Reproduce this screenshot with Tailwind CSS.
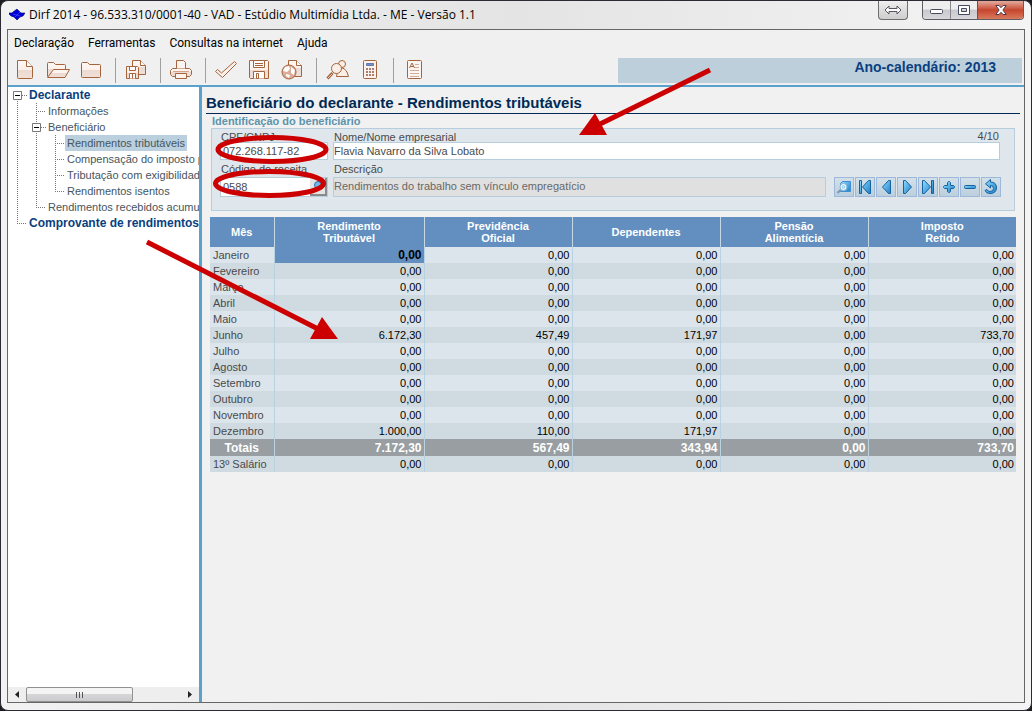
<!DOCTYPE html>
<html lang="pt-BR">
<head>
<meta charset="utf-8">
<title>Dirf 2014</title>
<script src="https://cdn.jsdelivr.net/npm/@tailwindcss/browser@4"></script>
</head>
<body class="bg-[#1d1a22] font-['Liberation_Sans',Arial,sans-serif] text-[11px] leading-4 text-[#4a4a4a]">
<div class="relative flex h-screen flex-col overflow-hidden rounded-lg border border-[#2e2a33] bg-[#e6e6e6] bg-linear-to-r from-[#f2f2f2] via-[#e4e4e4] to-[#f4f4f4] px-1.5 pb-[7px]">

  <header class="flex h-7 shrink-0 items-start pr-px pl-0.5">
    <svg class="mt-1.5 shrink-0" width="16" height="16" viewBox="0 0 16 16"><path fill="#0000d8" stroke="#000060" stroke-width=".6" d="M8 2l3 3 1 1h4l-2 3-3 1-3 3-3-3-3-1-3-3h4l1-1z"/><path stroke="#5060ff" stroke-width=".6" d="M4 7l7 2M6 10l5-5"/></svg>
    <h1 class="grow pt-1.5 pl-1 font-['Open_Sans','Noto_Sans',sans-serif] text-[12px] leading-4 text-black">Dirf 2014 - 96.533.310/0001-40 - VAD - Estúdio Multimídia Ltda. - ME - Versão 1.1</h1>
    <button aria-label="Redimensionar" class="mr-3.5 flex h-[19px] w-[30px] items-center justify-center rounded-b border border-t-0 border-[#6d6d72] bg-linear-to-b from-[#f0f0f0] via-[#dcdcdc] to-[#cfcfcf]"><svg width="18" height="10" viewBox="0 0 18 10" fill="#fff" stroke="#55555d"><path d="M1 5l4-4v2.500h8V1l4 4-4 4V6.500H5V9z"/></svg></button>
    <div class="flex h-[19px] overflow-hidden rounded-b border border-t-0 border-[#5d5d63]">
      <button aria-label="Minimizar" class="flex w-7 items-center justify-center border-r border-[#88888d] bg-linear-to-b from-[#eee] from-45% via-[#c9c9cd] via-50% to-[#d8d8dc]"><svg width="13" height="6" viewBox="0 0 13 6" class="mt-1"><rect x=".5" y=".5" width="12" height="4" rx="1" fill="#fff" stroke="#444a60"/></svg></button>
      <button aria-label="Maximizar" class="flex w-[27px] items-center justify-center border-r border-[#7a4a48] bg-linear-to-b from-[#eee] from-45% via-[#c9c9cd] via-50% to-[#d8d8dc]"><svg width="12" height="10" viewBox="0 0 12 10"><path fill="#fff" stroke="#444a60" fill-rule="evenodd" d="M.5.5h11v9H.5zM3.500 3.500v3h5v-3z"/></svg></button>
      <button aria-label="Fechar" class="flex w-[45px] items-center justify-center bg-linear-to-b from-[#e0a396] from-5% via-[#c5452e] via-50% to-[#d9795c]"><svg width="12" height="10" viewBox="0 0 12 10"><path fill="#fff" stroke="#50384a" d="M.8.500h3.200l2 2.200 2-2.200h3.200L7.900 5l3.300 4.500H8L6 7.300 4 9.500H.8L4.100 5z"/></svg></button>
    </div>
  </header>

  <div class="flex min-h-0 grow flex-col border border-[#666] bg-[#f0f0f0]">
    <nav class="flex h-[26px] shrink-0 items-center gap-3.5 px-1.5 font-[Roboto,'Open_Sans',sans-serif] text-[12px] text-black">
      <button>Declaração</button><button>Ferramentas</button><button>Consultas na internet</button><button>Ajuda</button>
    </nav>

    <div class="flex h-[29px] shrink-0 items-start justify-between pr-0.5">
      <div class="flex h-[27px] items-center pt-px pl-1 text-[#a5643c]" role="toolbar">
        <svg width="0" height="0" class="absolute"><defs><linearGradient id="paper" x1="0" y1="0" x2="0" y2="1"><stop offset="0" stop-color="#fff8f4"/><stop offset=".5" stop-color="#fdf0ea"/><stop offset=".5" stop-color="#ecdad2"/><stop offset="1" stop-color="#f0e0d8"/></linearGradient></defs></svg>
        <button aria-label="Novo" class="flex w-[26px] justify-center"><svg width="24" height="22" viewBox="0 0 24 22" fill="url(#paper)" stroke="currentColor"><path d="M4.500 1.500h9l6 6v11a1 1 0 0 1-1 1h-13a1 1 0 0 1-1-1z"/><path fill="#fff" d="M13.500 1.500v6h6"/></svg></button>
        <button aria-label="Abrir" class="ml-1.5 flex w-[27px] justify-center"><svg width="26" height="22" viewBox="0 0 26 22" fill="url(#paper)" stroke="currentColor"><path d="M2.500 17.500v-13a1 1 0 0 1 1-1h5l2 2h9a1 1 0 0 1 1 1v4"/><path d="M2.500 18.500l6-8h16l-4.500 8z"/></svg></button>
        <button aria-label="Fechar declaração" class="ml-2 flex w-6 justify-center"><svg width="24" height="22" viewBox="0 0 24 22" fill="url(#paper)" stroke="currentColor"><path d="M2.500 17.500v-13a1 1 0 0 1 1-1h5l2 2h10a1 1 0 0 1 1 1v11a1 1 0 0 1-1 1h-17a1 1 0 0 1-1-1z"/></svg></button>
        <span class="mr-2 ml-3 h-[25px] w-px bg-[#a0a0a0]"></span>
        <button aria-label="Gravar cópia" class="flex w-6 justify-center"><svg width="24" height="22" viewBox="0 0 24 22" fill="url(#paper)" stroke="currentColor"><path d="M8.500 1.500h8l5 5v9h-13z"/><path fill="#fff" d="M16.500 1.500v5h5"/><path d="M2.500 7.500h11l1 1v11h-12z"/><path fill="#fff" d="M5.500 7.500h6v4h-6zM5.500 19.500v-5h6v5M8.500 14.500v5"/></svg></button>
        <span class="mr-2 ml-3 h-[25px] w-px bg-[#a0a0a0]"></span>
        <button aria-label="Imprimir" class="flex w-6 justify-center"><svg width="24" height="22" viewBox="0 0 24 22" fill="url(#paper)" stroke="currentColor"><path d="M3.500 9.500h17l2 2v4l-2 2h-17l-2-2v-4z"/><path fill="#fdf3ee" d="M7.500 9.500v-8h7l2 2v6M6.500 14.500h11v5h-11z"/><path stroke="#d9a08a" d="M4 12.500h16"/></svg></button>
        <span class="mr-2 ml-3 h-[25px] w-px bg-[#a0a0a0]"></span>
        <button aria-label="Verificar" class="flex w-6 justify-center"><svg width="24" height="22" viewBox="0 0 24 22" fill="#fbf1ec" stroke="currentColor"><path d="M1.500 12.500l2-2 4 3.500L20.500 2.500l2 2L8.500 18.500z"/></svg></button>
        <button aria-label="Salvar" class="ml-[9px] flex w-6 justify-center"><svg width="24" height="22" viewBox="0 0 24 22" fill="url(#paper)" stroke="currentColor"><path d="M2.500 1.500h18l1 1v17h-18l-1-1z"/><path fill="#fff" d="M6.500 1.500h11v7h-11zM6.500 19.500v-7h11v7M9.500 14.500h2v5h-2z"/><path d="M8 4.500h8M8 6.500h8"/></svg></button>
        <button aria-label="Transmitir" class="ml-[9px] flex w-6 justify-center"><svg width="24" height="22" viewBox="0 0 24 22" fill="url(#paper)" stroke="currentColor"><path d="M8.500 1.500h8l5 5v11h-13z"/><path fill="#fff" d="M16.500 1.500v5h5"/><circle cx="9" cy="13" r="7" fill="#d9ad99"/><path fill="#fff" stroke="none" d="M5 8l4-1 1 3-3 3-4-1zM11 8l4 3-1 5-3-2zM6 15l4 1-1 3-3-2z"/></svg></button>
        <span class="mr-[9px] ml-3 h-[25px] w-px bg-[#a0a0a0]"></span>
        <button aria-label="Consultar" class="flex w-6 justify-center"><svg width="24" height="22" viewBox="0 0 24 22" fill="#fbeee7" stroke="currentColor"><circle cx="16" cy="5" r="3.500"/><path d="M10.500 17.500q1-9 5.500-8.500t6.500 8.500z"/><circle cx="10.500" cy="9.500" r="5" /><path stroke-width="3" d="M1.500 19.500l5-5.500"/><path stroke="#e7c8b8" d="M2 19l4-4"/></svg></button>
        <button aria-label="Calculadora" class="ml-2 flex w-6 justify-center"><svg width="24" height="22" viewBox="0 0 24 22" fill="#fdf3ee" stroke="currentColor"><rect x="5.500" y="1.500" width="13" height="18" rx="1"/><path fill="#7590c5" stroke="#6679a8" d="M8.500 4.500h7v2h-7z"/><path stroke="#a87f72" stroke-width="2" stroke-dasharray="2 1" d="M8 10h8M8 13h8M8 16h8"/></svg></button>
        <span class="mr-[9px] ml-[11px] h-[25px] w-px bg-[#a0a0a0]"></span>
        <button aria-label="Ajuda do preenchimento" class="flex w-6 justify-center"><svg width="24" height="22" viewBox="0 0 24 22" fill="#fdf5f1" stroke="currentColor"><rect x="4.500" y="1.500" width="14" height="18" rx="1"/><path fill="none" d="M6.500 9l2.500-5 2.500 5M7.500 7.500h3"/><path stroke="#d3ab9b" d="M12 5.500h4M12 8.500h4M7 11.500h9M7 14.500h9M7 17.500h9"/></svg></button>
      </div>
      <div class="mt-0.5 h-[25px] w-[404px] bg-[#bdcfdb] pr-[26px] text-right text-[14px] leading-[18px] font-bold text-[#0a3f80]">Ano-calendário: 2013</div>
    </div>

    <div class="flex min-h-0 grow border-t-2 border-[#5aa2cb]">
      <aside class="flex w-[194px] shrink-0 flex-col border-r-3 border-[#5aa2cb] bg-white">
        <div class="relative grow overflow-hidden text-[11px] whitespace-nowrap text-[#46555e]">
          <svg class="absolute top-0 left-0" width="70" height="150" viewBox="0 0 70 150" fill="none" stroke="#777" stroke-dasharray="1 1"><path d="M9.500 12v124.500M9 136.500h10M28.500 16v19M28.500 44v76.500M28 120.500h9M28 24.500h9M47.500 48v56.500M47 104.500h9M47 56.500h9M47 72.500h9M47 88.500h9M14 8.500h5M33 40.500h5"/><g stroke-dasharray="none"><path fill="#fff" d="M5.500 4.500h8v8h-8zM24.500 36.500h8v8h-8z"/><path stroke="#000" d="M7 8.500h5M26 40.500h5"/></g></svg>
          <ul class="relative">
            <li class="pl-[21px] text-[12px] font-bold text-[#0a3f80]">Declarante</li>
            <li class="pl-10">Informações</li>
            <li class="pl-10">Beneficiário</li>
            <li class="pl-[57px]"><span class="inline-block bg-[#bad0de] px-0.5">Rendimentos tributáveis</span></li>
            <li class="pl-[59px]">Compensação do imposto por decisão</li>
            <li class="pl-[59px]">Tributação com exigibilidade suspensa</li>
            <li class="pl-[59px]">Rendimentos isentos</li>
            <li class="pl-10">Rendimentos recebidos acumuladamente</li>
            <li class="pl-[21px] text-[12px] font-bold text-[#0a3f80]">Comprovante de rendimentos</li>
          </ul>
        </div>
        <div class="flex h-[15px] shrink-0 items-center bg-[#eee]">
          <span class="flex w-[18px] justify-center"><svg width="4" height="7" viewBox="0 0 4 7"><path fill="#222" d="M4 0v7L0 3.500z"/></svg></span>
          <span class="flex h-[15px] w-[107px] items-center justify-center gap-0.5 rounded-xs border border-[#919191] bg-linear-to-b from-[#f4f4f4] from-45% via-[#d6d6d8] via-50% to-[#cbcbce]"><i class="h-1.5 w-px bg-[#555]"></i><i class="h-1.5 w-px bg-[#555]"></i><i class="h-1.5 w-px bg-[#555]"></i></span>
          <span class="ml-auto flex w-[18px] justify-center"><svg width="4" height="7" viewBox="0 0 4 7"><path fill="#222" d="M0 0v7l4-3.500z"/></svg></span>
        </div>
      </aside>

      <main class="min-w-0 grow bg-[#f1f1f1] pt-1.5 pr-1 pl-1">
        <h2 class="h-[21px] border-b border-[#002a55] text-[15px] leading-5 font-bold text-[#002a55]">Beneficiário do declarante - Rendimentos tributáveis</h2>
        <div class="pr-[5px] pl-[5px]">
          <h3 class="h-3.5 pl-px text-[11px] leading-[15px] font-bold text-[#5c94ad]">Identificação do beneficiário</h3>
          <form class="flex h-[83px] flex-col border border-[#b5cddd] bg-[#dfe7ed] pt-px pr-3.5 pl-2">
            <div class="flex gap-[5px]">
              <div class="w-[108px] shrink-0"><label for="cpf" class="block h-3 pl-px leading-[15px]">CPF/CNPJ</label><input id="cpf" value="072.268.117-82" class="block h-[18px] w-full border border-[#b5cddd] bg-white px-0.5"></div>
              <div class="relative grow"><label for="nome" class="block h-3 pl-px leading-[15px]">Nome/Nome empresarial</label><output class="absolute top-0 right-px leading-3">4/10</output><input id="nome" value="Flavia Navarro da Silva Lobato" class="block h-[18px] w-full border border-[#b5cddd] bg-white"></div>
            </div>
            <div class="mt-0.5 flex items-end gap-[5px]">
              <div class="w-[108px] shrink-0"><label for="cod" class="block h-[15px] pl-px leading-[15px]">Código de receita</label><div class="flex h-5 border border-[#b5cddd] bg-white"><input id="cod" value="0588" class="w-0 grow px-0.5"><button type="button" aria-label="Pesquisar código" class="flex w-[17px] items-center justify-center border-r-2 border-b-2 border-[#8a8a8a] bg-[#e4e4e4]"><svg width="12" height="12" viewBox="0 0 12 12"><circle cx="6" cy="5" r="3.500" fill="#74b8ea" stroke="#236fae"/></svg></button></div></div>
              <div class="grow"><label for="desc" class="block h-[15px] pl-px leading-[15px]">Descrição</label><input id="desc" readonly value="Rendimentos do trabalho sem vínculo empregatício" class="block h-5 w-full border border-[#b5cddd] bg-[#e0e0e0] pb-0.5 text-[#686868]"></div>
              <div class="-mr-px ml-[3px] flex gap-px">
                <svg width="0" height="0" class="absolute"><defs><linearGradient id="blue" x1="0" y1="0" x2="1" y2="1"><stop offset="0" stop-color="#8fdcff"/><stop offset="1" stop-color="#1f7fc8"/></linearGradient></defs></svg>
                <button type="button" aria-label="Localizar" class="flex size-5 items-center justify-center border border-[#9db8d8] bg-linear-to-b from-[#d3e0ea] to-[#bccfdd]"><svg width="16" height="16" viewBox="0 0 16 16" fill="url(#blue)" stroke="#15629f"><path stroke="#3f8fd0" d="M4.500 4.500l2-2h8v10h-10z"/><path stroke="#7699b8" stroke-width="2" d="M1.500 14l4-4"/><circle cx="7.500" cy="8" r="3.500" fill="#fff" stroke="#7fb4dc"/><circle cx="7.500" cy="8" r="1.500" fill="#cceeff" stroke="#8dc8e8"/></svg></button>
                <button type="button" aria-label="Primeiro" class="flex size-5 items-center justify-center border border-[#9db8d8] bg-linear-to-b from-[#d3e0ea] to-[#bccfdd]"><svg width="16" height="16" viewBox="0 0 16 16" fill="url(#blue)" stroke="#15629f"><path d="M2.500 1.500h2v13h-2zM13.500 1.500v13h-2L5.500 8l6-6.500z"/></svg></button>
                <button type="button" aria-label="Anterior" class="flex size-5 items-center justify-center border border-[#9db8d8] bg-linear-to-b from-[#d3e0ea] to-[#bccfdd]"><svg width="16" height="16" viewBox="0 0 16 16" fill="url(#blue)" stroke="#15629f"><path d="M12.500 1.500v13h-2L4.500 8l6-6.500z"/></svg></button>
                <button type="button" aria-label="Próximo" class="flex size-5 items-center justify-center border border-[#9db8d8] bg-linear-to-b from-[#d3e0ea] to-[#bccfdd]"><svg width="16" height="16" viewBox="0 0 16 16" fill="url(#blue)" stroke="#15629f"><path d="M4.500 1.500v13h2L12.500 8l-6-6.500z"/></svg></button>
                <button type="button" aria-label="Último" class="flex size-5 items-center justify-center border border-[#9db8d8] bg-linear-to-b from-[#d3e0ea] to-[#bccfdd]"><svg width="16" height="16" viewBox="0 0 16 16" fill="url(#blue)" stroke="#15629f"><path d="M11.500 1.500h2v13h-2zM2.500 1.500v13h2l6-6.500-6-6.500z"/></svg></button>
                <button type="button" aria-label="Incluir" class="flex size-5 items-center justify-center border border-[#9db8d8] bg-linear-to-b from-[#d3e0ea] to-[#bccfdd]"><svg width="16" height="16" viewBox="0 0 16 16" fill="url(#blue)" stroke="#15629f"><path d="M6.500 3.500l1-1h1l1 1v3h3l1 1v1l-1 1h-3v3l-1 1h-1l-1-1v-3h-3l-1-1v-1l1-1h3z"/></svg></button>
                <button type="button" aria-label="Excluir" class="flex size-5 items-center justify-center border border-[#9db8d8] bg-linear-to-b from-[#d3e0ea] to-[#bccfdd]"><svg width="16" height="16" viewBox="0 0 16 16" fill="url(#blue)" stroke="#15629f"><rect x="2.500" y="6.500" width="11" height="3" rx="1"/></svg></button>
                <button type="button" aria-label="Desfazer" class="flex size-5 items-center justify-center border border-[#9db8d8] bg-linear-to-b from-[#d3e0ea] to-[#bccfdd]"><svg width="16" height="16" viewBox="0 0 16 16" fill="url(#blue)" stroke="#15629f"><path d="M7.500.500v2.500q6 0 6 6-.5 5.500-6.500 5.500-4 0-5-3l2-1q1 2 3 2 3.500 0 3.500-3T7.500 6.500V9l-5-4.200z"/></svg></button>
              </div>
            </div>
          </form>
        </div>

        <table class="mt-1.5 ml-1 w-[calc(100%-8px)] table-fixed border-collapse text-right text-black [&_td]:p-0 [&_td]:pt-px [&_td]:pr-0.5 [&_td]:leading-[15px] [&_tbody_th]:pt-px [&_tbody_th]:leading-[15px] [&_tbody_tr:nth-child(odd)]:bg-[#dce4ec] [&_tbody_tr:nth-child(even)]:bg-[#d0dbe1] [&_tbody_th]:pl-[3px] [&_tbody_th]:text-left [&_tbody_th]:font-normal [&_tbody_th]:text-[#4a4a4a]">
          <colgroup><col class="w-16"><col class="w-[150px]"><col><col><col><col></colgroup>
          <thead class="bg-[#628fc0] text-center leading-3 text-white">
            <tr class="h-[30px] divide-x divide-[#c6d8e6]"><th>Mês</th><th>Rendimento<br>Tributável</th><th>Previdência<br>Oficial</th><th>Dependentes</th><th>Pensão<br>Alimentícia</th><th>Imposto<br>Retido</th></tr>
          </thead>
          <tbody class="[&_tr]:h-4 [&_tr]:divide-x [&_tr]:divide-[#b9d2e2]">
            <tr><th>Janeiro</th><td class="bg-[#628fc0] text-[12px] font-bold">0,00</td><td>0,00</td><td>0,00</td><td>0,00</td><td>0,00</td></tr>
            <tr><th>Fevereiro</th><td>0,00</td><td>0,00</td><td>0,00</td><td>0,00</td><td>0,00</td></tr>
            <tr><th>Março</th><td>0,00</td><td>0,00</td><td>0,00</td><td>0,00</td><td>0,00</td></tr>
            <tr><th>Abril</th><td>0,00</td><td>0,00</td><td>0,00</td><td>0,00</td><td>0,00</td></tr>
            <tr><th>Maio</th><td>0,00</td><td>0,00</td><td>0,00</td><td>0,00</td><td>0,00</td></tr>
            <tr><th>Junho</th><td>6.172,30</td><td>457,49</td><td>171,97</td><td>0,00</td><td>733,70</td></tr>
            <tr><th>Julho</th><td>0,00</td><td>0,00</td><td>0,00</td><td>0,00</td><td>0,00</td></tr>
            <tr><th>Agosto</th><td>0,00</td><td>0,00</td><td>0,00</td><td>0,00</td><td>0,00</td></tr>
            <tr><th>Setembro</th><td>0,00</td><td>0,00</td><td>0,00</td><td>0,00</td><td>0,00</td></tr>
            <tr><th>Outubro</th><td>0,00</td><td>0,00</td><td>0,00</td><td>0,00</td><td>0,00</td></tr>
            <tr><th>Novembro</th><td>0,00</td><td>0,00</td><td>0,00</td><td>0,00</td><td>0,00</td></tr>
            <tr><th>Dezembro</th><td>1.000,00</td><td>110,00</td><td>171,97</td><td>0,00</td><td>0,00</td></tr>
          </tbody>
          <tfoot class="[&_tr]:divide-x [&_tr]:divide-[#b9d2e2]">
            <tr class="h-[17px] bg-[#989ea1] text-[12px] font-bold text-white"><th class="text-center">Totais</th><td>7.172,30</td><td>567,49</td><td>343,94</td><td>0,00</td><td>733,70</td></tr>
            <tr class="h-4 bg-[#d0dbe1]"><th class="pt-px pl-[3px] text-left leading-[15px] font-normal text-[#4a4a4a]">13º Salário</th><td>0,00</td><td>0,00</td><td>0,00</td><td>0,00</td><td>0,00</td></tr>
          </tfoot>
        </table>
      </main>
    </div>
  </div>
</div>

<!-- Red callouts drawn over the window -->
<svg class="pointer-events-none absolute top-0 left-0" width="1032" height="711" viewBox="0 0 1032 711" fill="none" stroke="#c00" stroke-width="5">
  <ellipse cx="272" cy="149.500" rx="54" ry="12"/>
  <ellipse cx="269.500" cy="183.500" rx="54" ry="12"/>
  <path d="M710 70L598 125M147 242L322 331"/>
  <path stroke="none" fill="#c00" d="M579 135l16-22 12 22zM338 339h-28l12-22z"/>
</svg>
</body>
</html>
